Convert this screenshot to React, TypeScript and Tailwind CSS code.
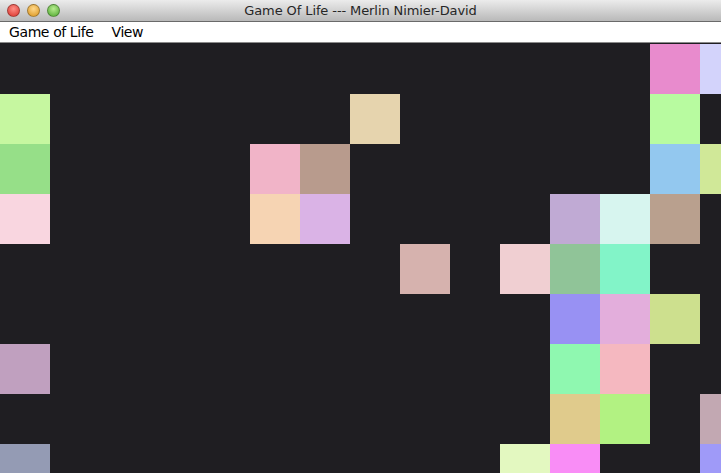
import React from 'react'

// live cells: [row, col, colour]
const CELLS: [number, number, string][] = [
  [0, 13, '#e88bcd'], [0, 14, '#d3d3fb'],
  [1, 0, '#c6f7a0'], [1, 7, '#e6d4ae'], [1, 13, '#b8fba0'],
  [2, 0, '#96df88'], [2, 5, '#f1b4c8'], [2, 6, '#b89b8d'], [2, 13, '#93c8ef'], [2, 14, '#d0e898'],
  [3, 0, '#f9d6e0'], [3, 5, '#f6d4b3'], [3, 6, '#dab3e6'], [3, 11, '#c0aad4'], [3, 12, '#d7f5ef'], [3, 13, '#b9a08e'],
  [4, 8, '#d6b2ae'], [4, 10, '#f0cfd2'], [4, 11, '#90c498'], [4, 12, '#82f4c8'],
  [5, 11, '#9891f3'], [5, 12, '#e3aedc'], [5, 13, '#cde08e'],
  [6, 0, '#c0a0bf'], [6, 11, '#8ff8b0'], [6, 12, '#f5b8c0'],
  [7, 11, '#e0cb8c'], [7, 12, '#b2f282'], [7, 14, '#c2a8b2'],
  [8, 0, '#949bb4'], [8, 10, '#e3f8c0'], [8, 11, '#f98df6'], [8, 14, '#9f9af8'],
]

const ROWS = 9
const COLS = 15

function TrafficLight({ from, to }: { from: string; to: string }) {
  return (
    <span
      className="block w-[13px] h-[13px] rounded-full border border-black/30"
      style={{ background: `radial-gradient(circle at 50% 35%, ${from}, ${to})` }}
    />
  )
}

export default function App() {
  const lookup = new Map(CELLS.map(([r, c, col]) => [`${r}-${c}`, col]))

  return (
    <div className="w-[721px] h-[473px] overflow-hidden bg-[#1f1e22] flex flex-col" style={{ fontFamily: '"DejaVu Sans", "Open Sans", sans-serif' }}>
      {/* Title bar */}
      <div className="relative h-[22px] shrink-0 flex items-center bg-gradient-to-b from-[#ececec] to-[#b9b9b9] border-b border-[#6a6a6a]">
        <div className="flex items-center gap-[7px] pl-[7px]">
          <TrafficLight from="#ff8f86" to="#d8322b" />
          <TrafficLight from="#ffd88a" to="#d9941c" />
          <TrafficLight from="#b7ec8f" to="#4da72e" />
        </div>
        <div className="absolute inset-0 flex items-center justify-center text-[13px] text-[#262626] tracking-[-0.1px]">
          Game Of Life --- Merlin Nimier-David
        </div>
      </div>

      {/* Menu bar */}
      <div className="h-[21px] shrink-0 bg-white border-b border-[#8a8a8a] flex items-center gap-[18px] pl-[9px] text-[14px] text-black tracking-[-0.4px]">
        <span>Game of Life</span>
        <span>View</span>
      </div>

      {/* Board */}
      <div className="pt-[1px]">
        <div className="grid grid-cols-[repeat(15,50px)] grid-rows-[repeat(9,50px)]">
          {Array.from({ length: ROWS * COLS }, (_, i) => {
            const r = Math.floor(i / COLS)
            const c = i % COLS
            const col = lookup.get(`${r}-${c}`)
            return <div key={i} style={col ? { background: col } : undefined} />
          })}
        </div>
      </div>
    </div>
  )
}
